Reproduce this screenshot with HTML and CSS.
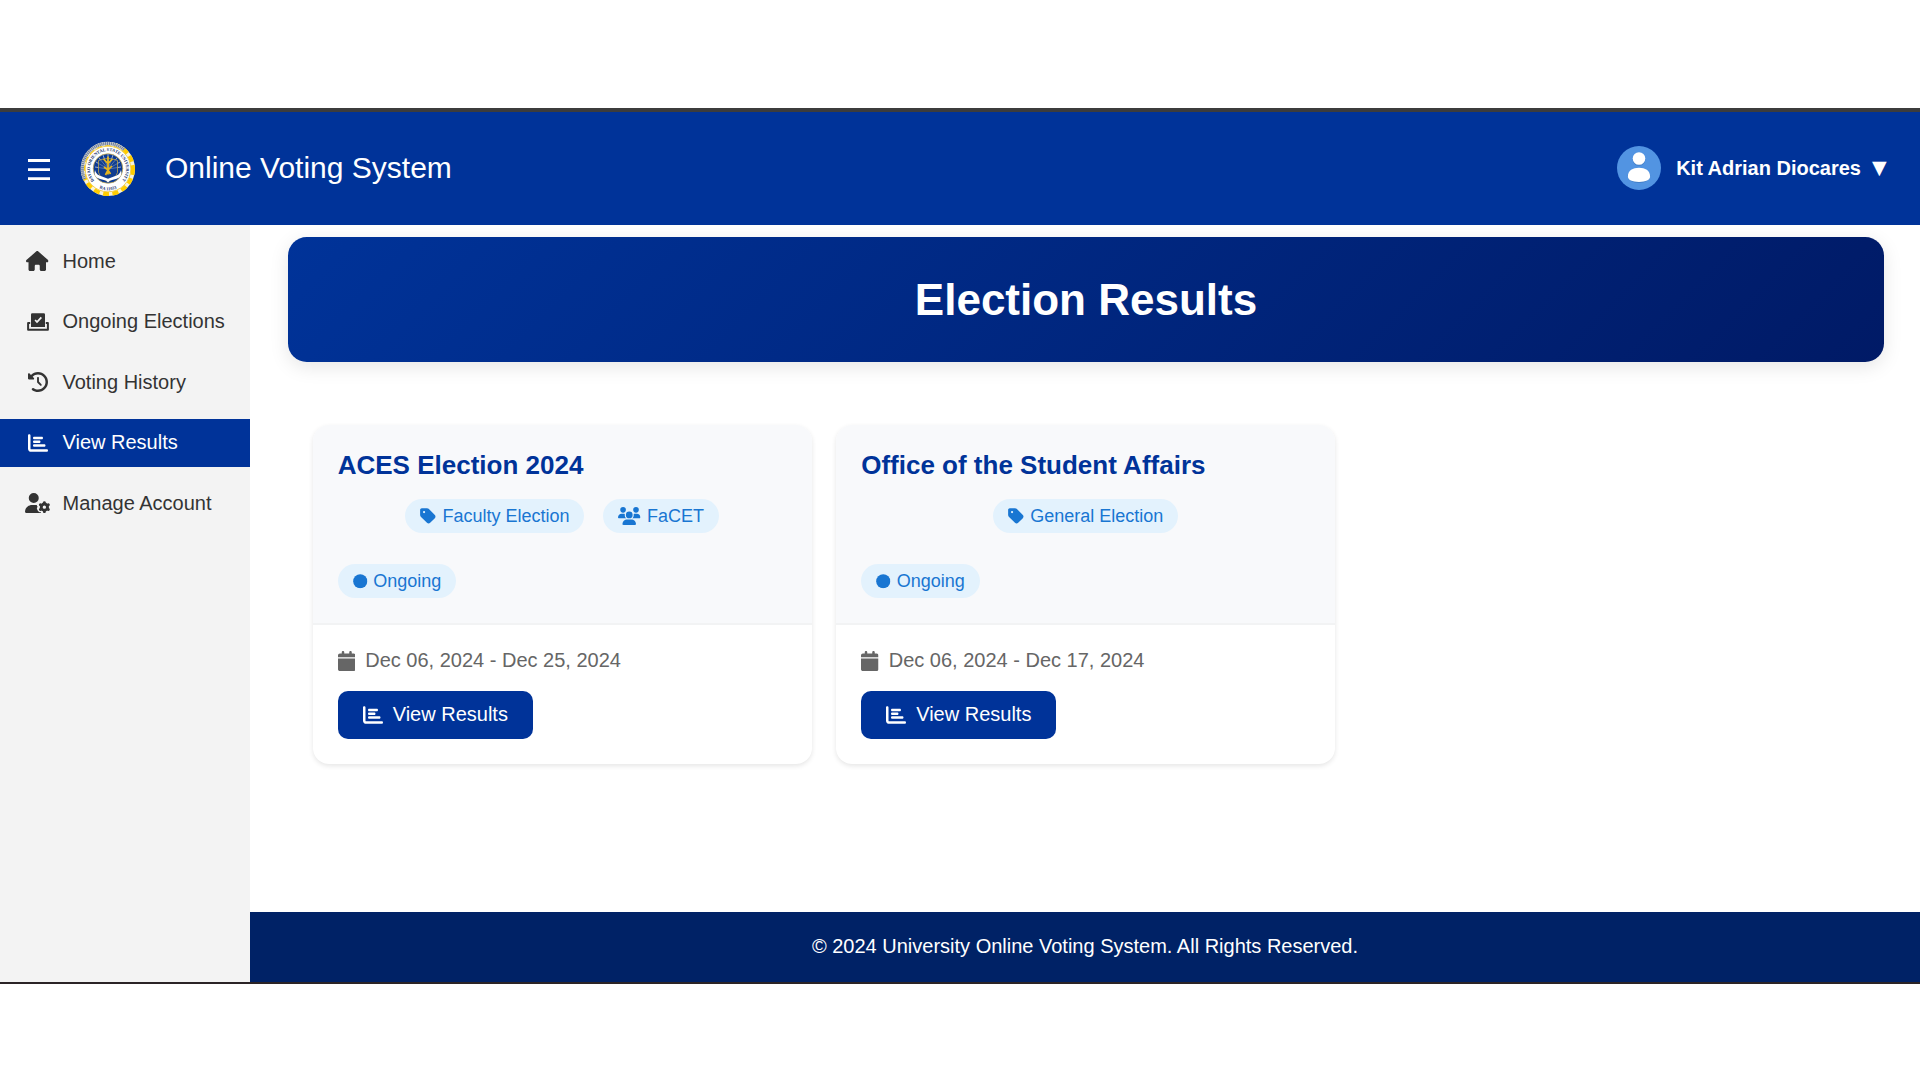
FILE: index.html
```html
<!DOCTYPE html>
<html lang="en">
<head>
<meta charset="utf-8">
<title>Online Voting System - Election Results</title>
<link rel="stylesheet" href="styles.css">
</head>
<body>
<svg class="sprite" aria-hidden="true">
  <symbol id="i-home" viewBox="0 0 576 512"><path d="M575.8 255.5c0 18-15 32.1-32 32.1h-32l.7 160.2c0 2.7-.2 5.4-.5 8.1V472c0 22.1-17.9 40-40 40H456c-1.1 0-2.2 0-3.3-.1c-1.4 .1-2.8 .1-4.2 .1H416 392c-22.1 0-40-17.9-40-40V448 384c0-17.7-14.3-32-32-32H256c-17.7 0-32 14.3-32 32v64 24c0 22.1-17.9 40-40 40H160 128.1c-1.5 0-3-.1-4.5-.2c-1.2 .1-2.4 .2-3.6 .2H104c-22.1 0-40-17.9-40-40V360c0-.9 0-1.9 .1-2.8V287.6H32c-18 0-32-14-32-32.1c0-9 3-17 10-24L266.4 8c7-7 15-8 22-8s15 2 21 7L564.8 231.5c8 7 12 15 11 24z"/></symbol>
  <symbol id="i-vote" viewBox="0 0 22 18"><path fill-rule="evenodd" d="M5.200.3h11.600q1.200 0 1.200 1.200v12.500H4V1.500Q4 .3 5.200.3zM7.500 7.600l2.500 2.700 5-5.300-1.300-1.200-3.700 4-1.300-1.400z"/><path d="M3.200 10H1.100v6.800h19.800V10h-2.100" fill="none" stroke="currentColor" stroke-width="2" stroke-linejoin="round"/></symbol>
  <symbol id="i-history" viewBox="0 0 512 512"><path d="M75 75L41 41C25.9 25.9 0 36.6 0 57.9V168c0 13.3 10.7 24 24 24H134.1c21.4 0 32.1-25.9 17-41l-30.8-30.8C155 85.5 203 64 256 64c106 0 192 86 192 192s-86 192-192 192c-40.8 0-78.6-12.7-109.7-34.4c-14.5-10.1-34.4-6.6-44.6 7.9s-6.6 34.4 7.9 44.6C151.2 495 201.7 512 256 512c141.4 0 256-114.6 256-256S397.4 0 256 0C185.3 0 121.3 28.7 75 75zm181 53c-13.3 0-24 10.7-24 24V256c0 6.4 2.5 12.5 7 17l72 72c9.4 9.4 24.6 9.4 33.9 0s9.4-24.6 0-33.9l-65-65V152c0-13.3-10.7-24-24-24z"/></symbol>
  <symbol id="i-chart" viewBox="0 0 512 512"><path d="M32 32c17.700 0 32 14.300 32 32V400c0 8.800 7.200 16 16 16H480c17.700 0 32 14.300 32 32s-14.300 32-32 32H80c-44.200 0-80-35.800-80-80V64C0 46.300 14.300 32 32 32zm96 96c0-17.700 14.300-32 32-32l192 0c17.700 0 32 14.300 32 32s-14.300 32-32 32l-192 0c-17.700 0-32-14.300-32-32zm32 64H288c17.700 0 32 14.300 32 32s-14.300 32-32 32H160c-17.700 0-32-14.300-32-32s14.300-32 32-32zm0 96H416c17.700 0 32 14.300 32 32s-14.300 32-32 32H160c-17.700 0-32-14.300-32-32s14.300-32 32-32z"/></symbol>
  <symbol id="i-usergear" viewBox="0 0 640 512"><path d="M224 0a128 128 0 1 1 0 256A128 128 0 1 1 224 0zM178.300 304h91.400c11.800 0 23.400 1.200 34.500 3.300c-2.100 18.500 7.400 35.600 21.800 44.800c-16.600 10.600-26.700 31.600-20 53.300c4 12.900 9.400 25.500 16.400 37.600s15.200 23.100 24.400 33c15.700 16.900 39.600 18.400 57.200 8.700v.9c0 9.200 2.700 18.500 7.900 26.300H29.700C13.300 512 0 498.700 0 482.300C0 383.800 79.800 304 178.300 304z"/><circle cx="496" cy="362" r="80" fill="none" stroke="currentColor" stroke-width="74"/><g stroke="currentColor" stroke-width="72" stroke-linecap="round"><path d="M496 244v20M496 460v20M394 303l17 10M581 411l17 10M394 421l17-10M581 313l17-10"/></g></symbol>
  <symbol id="i-users" viewBox="0 0 640 512"><path d="M144 0a80 80 0 1 1 0 160A80 80 0 1 1 144 0zM512 0a80 80 0 1 1 0 160A80 80 0 1 1 512 0zM0 298.700C0 239.800 47.800 192 106.700 192h42.700c15.900 0 31 3.500 44.600 9.700c-1.300 7.200-1.900 14.700-1.900 22.300c0 38.200 16.800 72.500 43.300 96c-.2 0-.4 0-.7 0H21.300C9.600 320 0 310.400 0 298.700zM405.300 320c-.2 0-.4 0-.7 0c26.600-23.500 43.300-57.800 43.300-96c0-7.600-.7-15-1.900-22.300c13.600-6.300 28.700-9.700 44.600-9.700h42.700C592.200 192 640 239.800 640 298.700c0 11.800-9.600 21.300-21.300 21.300H405.300zM224 224a96 96 0 1 1 192 0 96 96 0 1 1 -192 0zM128 485.300C128 411.700 187.700 352 261.300 352H378.700C452.300 352 512 411.700 512 485.300c0 14.700-11.900 26.700-26.700 26.700H154.700c-14.700 0-26.700-11.900-26.700-26.700z"/></symbol>
  <symbol id="i-tag" viewBox="0 0 448 512"><path d="M0 80V229.500c0 17 6.700 33.300 18.700 45.300l176 176c25 25 65.500 25 90.500 0L418.700 317.300c25-25 25-65.500 0-90.500l-176-176c-12-12-28.300-18.700-45.300-18.700H48C21.500 32 0 53.500 0 80zm112 32a32 32 0 1 1 0 64 32 32 0 1 1 0-64z"/></symbol>
  <symbol id="i-calendar" viewBox="0 0 448 512"><path d="M96 32V64H48C21.500 64 0 85.500 0 112v48H448V112c0-26.500-21.500-48-48-48H352V32c0-17.700-14.300-32-32-32s-32 14.300-32 32V64H160V32c0-17.700-14.300-32-32-32S96 14.300 96 32zM448 192H0V464c0 26.500 21.500 48 48 48H400c26.500 0 48-21.500 48-48V192z"/></symbol>
  <symbol id="i-circle" viewBox="0 0 16 16"><circle cx="8" cy="8" r="7.800"/></symbol>
</svg>

<div class="app">
  <header class="topbar">
    <svg class="menu" viewBox="0 0 22 22"><path d="M0 1.500h22M0 10.700h22M0 19.700h22"/></svg>
    <svg class="seal" viewBox="0 0 54 54">
      <defs>
        <path id="arc-top" d="M13.200 38.600A18 18 0 1 1 40.800 38.600"/>
        <path id="arc-bottom" d="M15 44.500A21.200 21.200 0 0 0 39 44.500"/>
      </defs>
      <circle cx="27" cy="27" r="27" fill="#f8f3da"/>
      <circle class="rim-gold" cx="27" cy="27" r="25"/>
      <path class="rim-pale" d="M3.500 37A25.300 25.300 0 0 1 43 7.500"/>
      <path class="rim-grey" d="M3.500 37A25.300 25.300 0 0 1 43 7.500"/>
      <circle cx="27" cy="27" r="22.800" fill="#fff" stroke="#f0c530" stroke-width=".8"/>
      <circle cx="27" cy="26.500" r="14.800" fill="#0b3a94" stroke="#d9b84a" stroke-width=".7"/>
      <g stroke="#b9c9e6" stroke-width=".8"><path d="M27 27L15 20M27 27L18 16M27 27L22 13M27 27V12M27 27L32 13M27 27L36 16M27 27L39 20M27 27L14 25M27 27L40 25"/></g>
      <path d="M17.500 18.500q9.500-4 19 0v12q-2 6-9.500 9-7.500-3-9.500-9z" fill="#17418d" fill-opacity=".55" stroke="#bba54f" stroke-width=".8"/>
      <path d="M14 28q-2 7 5 9l6 1.500 2 2 2-2 6-1.500q7-2 5-9-1 5-7 6.500l-6 2.200-6-2.200q-6-1.500-7-6.500z" fill="#fff"/>
      <path d="M27 14.500v18M22.500 17l4.500 4.500 4.500-4.500M23 25l4 3 4-4M24.500 33l2.500-5 2.500 4" fill="none" stroke="#e8b61d" stroke-width="1.700"/>
      <text class="seal-name"><textPath href="#arc-top" textLength="81" lengthAdjust="spacingAndGlyphs">DAVAO ORIENTAL STATE UNIVERSITY</textPath></text>
      <text class="seal-name"><textPath href="#arc-bottom" startOffset="50%" text-anchor="middle">RA 11033</textPath></text>
    </svg>
    <div class="brand">Online Voting System</div>
    <div class="account">
      <svg class="avatar" viewBox="0 0 44 44">
        <circle cx="22" cy="22" r="22" fill="#5294e2"/>
        <g fill="#173e75" opacity=".25"><circle cx="22" cy="13.500" r="6.300"/><ellipse cx="22" cy="29.900" rx="11.300" ry="7.100"/></g>
        <g fill="#fff"><circle cx="22" cy="12.500" r="6.300"/><path d="M10.900 30.500c0-6 5-8.700 11.100-8.700s11.100 2.700 11.100 8.700c0 3.500-4.100 5.400-11.100 5.400s-11.100-1.900-11.100-5.400z"/></g>
      </svg>
      <span class="account-name">Kit Adrian Diocares</span>
      <span class="caret">▼</span>
    </div>
  </header>

  <div class="body">
    <nav class="sidebar">
      <a class="nav-item"><span class="nav-icon"><svg class="ic-home"><use href="#i-home"/></svg></span>Home</a>
      <a class="nav-item"><span class="nav-icon"><svg class="ic-vote"><use href="#i-vote"/></svg></span>Ongoing Elections</a>
      <a class="nav-item"><span class="nav-icon"><svg class="ic-history"><use href="#i-history"/></svg></span>Voting History</a>
      <a class="nav-item active"><span class="nav-icon"><svg class="ic-chart"><use href="#i-chart"/></svg></span>View Results</a>
      <a class="nav-item"><span class="nav-icon"><svg class="ic-gear"><use href="#i-usergear"/></svg></span>Manage Account</a>
    </nav>

    <div class="content">
      <main class="main">
        <h1 class="banner">Election Results</h1>
        <section class="cards">
          <article class="card">
            <div class="card-head">
              <h2 class="card-title">ACES Election 2024</h2>
              <div class="tags">
                <span class="pill"><svg class="ic-tag"><use href="#i-tag"/></svg>Faculty Election</span>
                <span class="pill"><svg class="ic-users"><use href="#i-users"/></svg>FaCET</span>
              </div>
              <span class="pill"><svg class="ic-dot"><use href="#i-circle"/></svg>Ongoing</span>
            </div>
            <div class="card-body">
              <div class="dates"><svg class="ic-cal"><use href="#i-calendar"/></svg>Dec 06, 2024 - Dec 25, 2024</div>
              <a class="button"><svg class="ic-bchart"><use href="#i-chart"/></svg>View Results</a>
            </div>
          </article>
          <article class="card">
            <div class="card-head">
              <h2 class="card-title">Office of the Student Affairs</h2>
              <div class="tags">
                <span class="pill"><svg class="ic-tag"><use href="#i-tag"/></svg>General Election</span>
              </div>
              <span class="pill"><svg class="ic-dot"><use href="#i-circle"/></svg>Ongoing</span>
            </div>
            <div class="card-body">
              <div class="dates"><svg class="ic-cal"><use href="#i-calendar"/></svg>Dec 06, 2024 - Dec 17, 2024</div>
              <a class="button"><svg class="ic-bchart"><use href="#i-chart"/></svg>View Results</a>
            </div>
          </article>
        </section>
      </main>
      <footer class="footer">© 2024 University Online Voting System. All Rights Reserved.</footer>
    </div>
  </div>
</div>
</body>
</html>
```
FILE: styles.css
```css
* { box-sizing: border-box; }

body {
  margin: 0;
  padding-top: 108px;
  height: 1080px;
  overflow: hidden;
  background: #fff;
  color: #333;
  font: 20px/1.15 "Liberation Sans", Arial, sans-serif;
}

svg { display: block; flex: none; fill: currentColor; }
.sprite { display: none; }

.app {
  display: flex;
  flex-direction: column;
  height: 876px;
  border-top: 4px solid #3c3c3c;
  border-bottom: 2px solid #2b2426;
}

/* Top bar */
.topbar {
  display: flex;
  align-items: center;
  flex: none;
  height: 113px;
  padding: 0 33px 0 27.500px;
  background: #039;
  color: #fff;
}
.menu { width: 22px; height: 22px; margin-top: 2px; stroke: #fff; stroke-width: 2.8; }
.seal { width: 54px; height: 54px; margin-left: 31.500px; overflow: visible; }
.rim-gold { fill: none; stroke: #fc0; stroke-width: 4; stroke-dasharray: 6 3.500; }
.rim-pale { fill: none; stroke: #c5cad2; stroke-width: 3.400; }
.rim-grey { fill: none; stroke: #6d7c98; stroke-width: 3; stroke-dasharray: 1 .9; }
.seal-name { font: bold 4.400px "Liberation Serif", serif; fill: #17346f; }
.brand { margin-left: 30px; font-size: 30px; }
.account { display: flex; align-items: center; margin: -2px 0 0 auto; font-weight: bold; }
.account-name { padding-top: 1px; }
.avatar { width: 44px; height: 44px; margin-right: 15px; }
.caret { width: 15px; height: 20px; margin: 0 0 0 11px; font: 19px/1 "DejaVu Sans", sans-serif; }

.body { display: flex; flex: 1; min-height: 0; }

/* Sidebar */
.sidebar {
  display: flex;
  flex-direction: column;
  gap: 12.500px;
  width: 250px;
  padding-top: 12px;
  background: #f3f3f3;
}
.nav-item { display: flex; align-items: center; height: 48px; padding-left: 25px; }
.nav-item.active { background: #039; color: #fff; }
.nav-icon { display: flex; justify-content: center; width: 25px; margin-right: 12.500px; }
.ic-home { width: 22.500px; height: 20px; }
.ic-vote { width: 22px; height: 18px; }
.ic-history { width: 20px; height: 20px; }
.ic-chart { width: 20px; height: 20px; }
.ic-gear { width: 25px; height: 20px; }

/* Content */
.content { display: flex; flex: 1; flex-direction: column; }
.main { flex: 1; padding: 12px 36px 0 38px; }
.banner {
  display: flex;
  align-items: center;
  justify-content: center;
  height: 125px;
  margin: 0;
  padding-top: 2px;
  border-radius: 18.750px;
  background: linear-gradient(135deg, #039, #001a66);
  box-shadow: 0 5px 19px rgba(0, 0, 0, .1);
  color: #fff;
  font-size: 44px;
}
.cards { display: flex; gap: 24.500px; padding: 63.300px 0 0 24.700px; }
.card {
  width: 499px;
  height: 338.700px;
  overflow: hidden;
  border-radius: 16px;
  background: #fff;
  box-shadow: 0 2px 5px rgba(0, 0, 0, .1);
}
.card-head {
  display: flex;
  flex-direction: column;
  align-items: flex-start;
  height: 200px;
  padding: 24.700px 25px 0;
  border-bottom: 2px solid #f2f3f4;
  background: #f8f9fb;
}
.card-title { margin: 0 0 19px; color: #039; font-size: 26px; line-height: 30px; }
.tags { display: flex; justify-content: center; align-self: stretch; gap: 19px; margin-bottom: 31px; }
.pill {
  display: flex;
  align-items: center;
  gap: 6px;
  height: 34px;
  padding: 0 15px;
  border-radius: 17px;
  background: #e3f2fd;
  color: #1976d2;
  font-size: 18px;
}
.ic-tag { width: 16px; height: 18px; }
.ic-users { width: 22.500px; height: 18px; }
.ic-dot { width: 14.500px; height: 14.500px; overflow: visible; }
.card-body { padding: 24px 25px 0; }
.dates { display: flex; align-items: center; gap: 10px; height: 23px; margin-bottom: 18.500px; color: #666; }
.ic-cal { width: 17.500px; height: 20px; }
.button {
  display: inline-flex;
  align-items: center;
  gap: 10px;
  height: 48px;
  padding: 0 25px;
  border-radius: 10px;
  background: #039;
  color: #fff;
}
.ic-bchart { width: 20px; height: 20px; }

.footer {
  display: flex;
  align-items: center;
  justify-content: center;
  height: 70px;
  padding-bottom: 2px;
  background: #026;
  color: #fff;
}
```
